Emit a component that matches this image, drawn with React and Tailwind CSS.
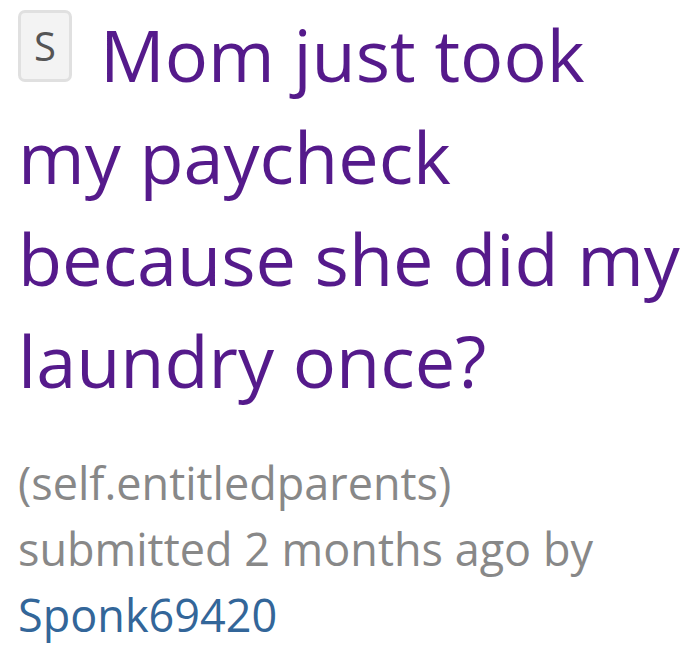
import React from "react";

const App = () => {
  return (
    <div className="bg-white w-[700px] h-[655px] overflow-hidden pl-[18px] pt-[3px]" style={{ fontFamily: '"Open Sans", "Noto Sans", sans-serif' }}>
      <h1 className="text-[72px] leading-[102px] text-[#551a8b] font-normal whitespace-nowrap">
        <span className="inline-flex items-center justify-center align-top mt-[7px] mr-[28px] w-[54px] h-[72px] bg-[#f3f3f3] border-[3px] border-[#e0e0e0] rounded-[7px] text-[#555] text-[40px] leading-none">
          S
        </span>
        Mom just took
        <br />
        my paycheck
        <br />
        because she did my
        <br />
        laundry once?
      </h1>
      <div className="mt-[39px] text-[45px] leading-[66px] text-[#888]">
        <div>(self.entitledparents)</div>
        <div>submitted 2 months ago by</div>
        <div className="text-[#336699]">Sponk69420</div>
      </div>
    </div>
  );
};

export default App;
